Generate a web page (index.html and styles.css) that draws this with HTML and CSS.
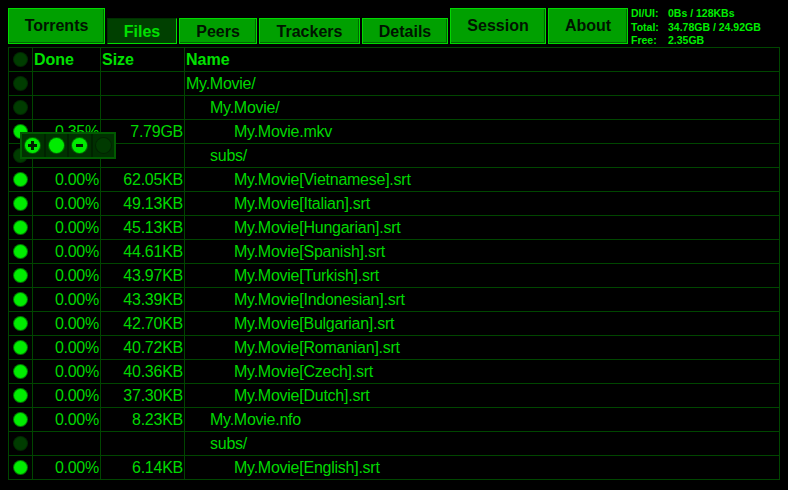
FILE: index.html
```html
<!DOCTYPE html>
<html>
<head>
<meta charset="utf-8">
<link rel="stylesheet" href="styles.css">
</head>
<body>
<div class="page">
  <div class="topbar">
    <div class="tab tab-big">Torrents</div>
    <div class="tab tab-active w-files">Files</div>
    <div class="tab w-peers">Peers</div>
    <div class="tab w-trackers">Trackers</div>
    <div class="tab w-details">Details</div>
    <div class="tab tab-big w-session">Session</div>
    <div class="tab tab-big w-about">About</div>
    <div class="stats">
      <div class="stat"><span class="lbl">DI/UI:</span><span>0Bs / 128KBs</span></div>
      <div class="stat"><span class="lbl">Total:</span><span>34.78GB / 24.92GB</span></div>
      <div class="stat"><span class="lbl">Free:</span><span>2.35GB</span></div>
    </div>
  </div>
  <table class="files">
    <colgroup><col class="c-led"><col class="c-done"><col class="c-size"><col></colgroup>
    <thead>
      <tr><th><span class="led off"></span></th><th>Done</th><th>Size</th><th>Name</th></tr>
    </thead>
    <tbody>
      <tr><td><span class="led off"></span></td><td></td><td></td><td class="l0">My.Movie/</td></tr>
      <tr><td><span class="led off"></span></td><td></td><td></td><td class="l1">My.Movie/</td></tr>
      <tr><td><span class="led"></span></td><td class="num">0.35%</td><td class="num">7.79GB</td><td class="l2">My.Movie.mkv</td></tr>
      <tr><td><span class="led off"></span></td><td></td><td></td><td class="l1">subs/</td></tr>
      <tr><td><span class="led"></span></td><td class="num">0.00%</td><td class="num">62.05KB</td><td class="l2">My.Movie[Vietnamese].srt</td></tr>
      <tr><td><span class="led"></span></td><td class="num">0.00%</td><td class="num">49.13KB</td><td class="l2">My.Movie[Italian].srt</td></tr>
      <tr><td><span class="led"></span></td><td class="num">0.00%</td><td class="num">45.13KB</td><td class="l2">My.Movie[Hungarian].srt</td></tr>
      <tr><td><span class="led"></span></td><td class="num">0.00%</td><td class="num">44.61KB</td><td class="l2">My.Movie[Spanish].srt</td></tr>
      <tr><td><span class="led"></span></td><td class="num">0.00%</td><td class="num">43.97KB</td><td class="l2">My.Movie[Turkish].srt</td></tr>
      <tr><td><span class="led"></span></td><td class="num">0.00%</td><td class="num">43.39KB</td><td class="l2">My.Movie[Indonesian].srt</td></tr>
      <tr><td><span class="led"></span></td><td class="num">0.00%</td><td class="num">42.70KB</td><td class="l2">My.Movie[Bulgarian].srt</td></tr>
      <tr><td><span class="led"></span></td><td class="num">0.00%</td><td class="num">40.72KB</td><td class="l2">My.Movie[Romanian].srt</td></tr>
      <tr><td><span class="led"></span></td><td class="num">0.00%</td><td class="num">40.36KB</td><td class="l2">My.Movie[Czech].srt</td></tr>
      <tr><td><span class="led"></span></td><td class="num">0.00%</td><td class="num">37.30KB</td><td class="l2">My.Movie[Dutch].srt</td></tr>
      <tr><td><span class="led"></span></td><td class="num">0.00%</td><td class="num">8.23KB</td><td class="l1">My.Movie.nfo</td></tr>
      <tr><td><span class="led off"></span></td><td></td><td></td><td class="l1">subs/</td></tr>
      <tr><td><span class="led"></span></td><td class="num">0.00%</td><td class="num">6.14KB</td><td class="l2">My.Movie[English].srt</td></tr>
    </tbody>
  </table>
  <div class="popup">
    <div class="pbtn"><span class="picon"><svg width="11" height="11" viewBox="0 0 11 11"><rect x="4" y="1" width="3" height="9" fill="#002200"/><rect x="1" y="4" width="9" height="3" fill="#002200"/></svg></span></div>
    <div class="pbtn"><span class="picon"></span></div>
    <div class="pbtn"><span class="picon"><svg width="11" height="11" viewBox="0 0 11 11"><rect x="2" y="4" width="7" height="3" fill="#002200"/></svg></span></div>
    <div class="pbtn"><span class="picon dim"></span></div>
  </div>
</div>
</body>
</html>
```

FILE: styles.css
```css
html, body {
  margin: 0;
  padding: 0;
  background: #000;
}
.page {
  position: relative;
  width: 788px;
  height: 490px;
  padding: 8px 0 0 8px;
  box-sizing: border-box;
  font-family: "Liberation Sans", Arial, sans-serif;
}
.topbar {
  display: flex;
  align-items: flex-end;
  gap: 2px;
  height: 36px;
}
.tab {
  box-sizing: border-box;
  height: 26px;
  background: #00a000;
  border: 1px solid #00d800;
  box-shadow: inset -1px -1px 0 #006a00;
  color: #001400;
  font-weight: bold;
  font-size: 16px;
  display: flex;
  align-items: center;
  justify-content: center;
  padding-top: 1px;
}
.tab-big {
  height: 36px;
  width: 97px;
  padding-top: 0;
  padding-bottom: 1px;
}
.tab-active {
  background: #004000;
  color: #00e000;
  border: 1px solid #003000;
  border-right-color: #00e000;
  border-bottom-color: #00e000;
  box-shadow: none;
}
.w-files { width: 70px; }
.w-peers { width: 78px; }
.w-trackers { width: 101px; }
.w-details { width: 86px; }
.w-session { width: 96px; }
.w-about { width: 80px; }
.stats {
  align-self: flex-start;
  margin-left: 1px;
  margin-top: -1px;
  font-size: 10.5px;
  font-weight: bold;
  color: #00ee00;
  line-height: 13.5px;
}
.stat {
  display: flex;
}
.lbl {
  width: 37px;
}
.files {
  margin-top: 3px;
  width: 772px;
  border-collapse: collapse;
  table-layout: fixed;
  color: #00d800;
}
.files tr {
  height: 24px;
}
.c-led { width: 24px; }
.c-done { width: 68px; }
.c-size { width: 84px; }
.files th, .files td {
  border: 1px solid #004600;
  padding: 0;
  white-space: nowrap;
}
.files th {
  text-align: left;
  font-size: 16px;
  font-weight: bold;
  padding-left: 1px;
  color: #00e000;
}
.files th:first-child, .files td:first-child {
  text-align: center;
  padding-left: 0;
}
.files td {
  font-size: 16px;
  letter-spacing: -0.25px;
}
.files td.num {
  text-align: right;
  padding-right: 1px;
}
.l0 { padding-left: 1px !important; }
.l1 { padding-left: 25px !important; }
.l2 { padding-left: 49px !important; }
.led {
  display: inline-block;
  width: 13px;
  height: 13px;
  border-radius: 50%;
  background: #00ec00;
  box-shadow: 0 0 0 1px #007a00;
  vertical-align: middle;
  margin-top: -2px;
}
.led.off {
  background: #003c00;
  box-shadow: 0 0 0 1px #002a00;
}
.popup {
  position: absolute;
  left: 20px;
  top: 132px;
  width: 96px;
  height: 27px;
  box-sizing: border-box;
  background: #003000;
  border: 2px solid #005a00;
  display: flex;
}
.pbtn {
  flex: 1;
  display: flex;
  align-items: center;
  justify-content: center;
  border-right: 2px solid #002200;
}
.pbtn:last-child {
  border-right: none;
}
.picon {
  width: 15px;
  height: 15px;
  border-radius: 50%;
  background: #00ec00;
  box-shadow: 0 0 0 1px #006a00;
  display: flex;
  align-items: center;
  justify-content: center;
}
.picon.dim {
  background: #003a00;
  box-shadow: 0 0 0 1px #002400;
}
```
